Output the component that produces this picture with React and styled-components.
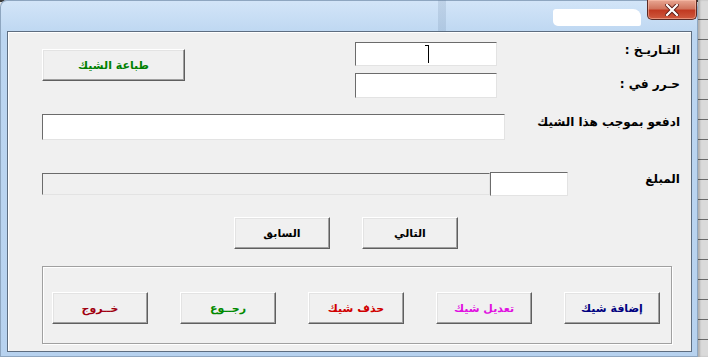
import React from 'react'
import styled, { createGlobalStyle } from 'styled-components'

const Global = createGlobalStyle`
  html, body {
    margin: 0;
    padding: 0;
    background: #dcdcdc;
  }
  #root {
    width: 708px;
    height: 357px;
    overflow: hidden;
  }
`

const FONT = `Tahoma, "DejaVu Sans", sans-serif`

export default function App() {
  return (
    <>
      <Global />
      <Desktop>
        <Window>
          <TitleBar>
            <Redacted />
            <CloseButton>
              <svg width="14" height="12" viewBox="0 0 14 12">
                <path d="M2 1 L12 11 M12 1 L2 11" stroke="#5a1a14" strokeWidth="4" strokeLinecap="square" />
                <path d="M2 1 L12 11 M12 1 L2 11" stroke="#fff" strokeWidth="2.2" strokeLinecap="square" />
              </svg>
            </CloseButton>
          </TitleBar>
          <Client>
            <TopGrid>
              <PrintButton color="#008000">طباعة الشيك</PrintButton>
              <InputCol>
                <TextBox h={24}>
                  <Caret />
                </TextBox>
                <TextBox h={25} />
              </InputCol>
              <LabelCol>
                <Label>التـاريـخ :</Label>
                <Label top={18}>حـرر في :</Label>
              </LabelCol>
            </TopGrid>

            <PayRow>
              <TextBox h={26} />
              <Label>ادفعو بموجب هذا الشيك</Label>
            </PayRow>

            <AmountRow>
              <AmountFields>
                <DisabledBox />
                <TextBox h={24} />
              </AmountFields>
              <Label>المبلغ</Label>
            </AmountRow>

            <NavRow>
              <Button>السابق</Button>
              <Button>التالي</Button>
            </NavRow>

            <Frame>
              <Button color="#a00010">خــروج</Button>
              <Button color="#008a00">رجــوع</Button>
              <Button color="#d00000">حذف شيك</Button>
              <Button color="#e010e0">تعديل شيك</Button>
              <Button color="#000080">إضافة شيك</Button>
            </Frame>
          </Client>
        </Window>
        <ExcelStrip />
      </Desktop>
    </>
  )
}

const Desktop = styled.div`
  display: flex;
  width: 708px;
  height: 357px;
  background: linear-gradient(to bottom, #3a3a3a 0 2px, #e6e6e6 2px);
`

const Window = styled.div`
  width: 698px;
  height: 357px;
  box-sizing: border-box;
  display: flex;
  flex-direction: column;
  padding: 0 6px 5px 7px;
  border-radius: 7px 7px 0 0;
  background: linear-gradient(to bottom, #d3e5f8 0%, #bcd6f1 10%, #b7d2ef 100%);
  box-shadow: inset 0 0 0 1px #8ea6c0, 1px 0 2px rgba(0, 0, 0, 0.35);
`

const TitleBar = styled.div`
  height: 31px;
  display: flex;
  justify-content: flex-end;
  align-items: flex-start;
  margin: 0 -5px 0 -7px;
  border-radius: 7px 7px 0 0;
  background: linear-gradient(
    to right,
    transparent 0 438px,
    rgba(100, 125, 155, 0.18) 438px 446px,
    transparent 446px
  );
`

const Redacted = styled.div`
  width: 88px;
  height: 17px;
  margin-top: 9px;
  margin-right: 6px;
  background: #fff;
  border-radius: 3px 8px 2px 5px;
  filter: blur(0.6px);
`

const CloseButton = styled.div`
  width: 50px;
  height: 20px;
  box-sizing: border-box;
  display: flex;
  align-items: center;
  justify-content: center;
  border: 1px solid #5b2a24;
  border-top: none;
  border-radius: 0 0 5px 5px;
  background: linear-gradient(to bottom, #e8a793 0%, #d1755e 45%, #c13a22 55%, #cf5a3f 100%);
  box-shadow: inset 0 0 0 1px rgba(255, 200, 180, 0.5);
`

const Client = styled.div`
  flex: 1;
  box-sizing: border-box;
  background: #f0f0f0;
  border: 1px solid #5d6d80;
  box-shadow: inset 1px 1px 0 #fff;
  display: flex;
  flex-direction: column;
  font-family: ${FONT};
  direction: ltr;
`

const TopGrid = styled.div`
  display: grid;
  grid-template-columns: 34px 143px 170px 142px 1fr;
  margin-top: 10px;
  padding-right: 11px;
  align-items: start;
`

const Label = styled.div`
  font-family: ${FONT};
  font-weight: bold;
  font-size: 12px;
  line-height: 16px;
  color: #000;
  text-align: right;
  direction: rtl;
  white-space: nowrap;
  margin-top: ${(p) => p.top || 0}px;
`

const LabelCol = styled.div`
  grid-column: 5;
  display: flex;
  flex-direction: column;
`

const InputCol = styled.div`
  grid-column: 4;
  display: flex;
  flex-direction: column;
  gap: 7px;
`

const TextBox = styled.div`
  position: relative;
  height: ${(p) => p.h}px;
  box-sizing: border-box;
  background: #fff;
  border: 1px solid;
  border-color: #6b6b6b #e3e3e3 #e3e3e3 #6b6b6b;
  display: flex;
  align-items: center;
  justify-content: center;
`

const Caret = styled.span`
  width: 1px;
  height: 18px;
  background: #000;
  position: relative;
  left: 2px;

  &::before {
    content: '';
    position: absolute;
    top: 0;
    left: -3px;
    width: 3px;
    height: 1px;
    background: #000;
  }
`

const DisabledBox = styled.div`
  width: 448px;
  height: 22px;
  box-sizing: border-box;
  background: #f0f0f0;
  border: 1px solid;
  border-color: #6b6b6b #e3e3e3 #e3e3e3 #6b6b6b;
`

const Button = styled.div`
  width: 96px;
  height: 32px;
  box-sizing: border-box;
  display: flex;
  align-items: center;
  justify-content: center;
  background: #f0f0f0;
  border: 1px solid;
  border-color: #ffffff #5f5f5f #5f5f5f #ffffff;
  box-shadow: inset -1px -1px 0 #a0a0a0, inset 1px 1px 0 #e3e3e3;
  color: ${(p) => p.color || '#000'};
  font-family: ${FONT};
  font-weight: bold;
  font-size: 11px;
  direction: rtl;
  white-space: nowrap;
`

const PrintButton = styled(Button)`
  grid-column: 2;
  width: 143px;
  height: 32px;
  margin-top: 7px;
`

const PayRow = styled.div`
  display: grid;
  grid-template-columns: 34px 463px 1fr;
  padding-right: 11px;
  margin-top: 16px;
  align-items: start;

  & > ${TextBox} {
    grid-column: 2;
  }
`

const AmountRow = styled.div`
  display: grid;
  grid-template-columns: 34px 526px 1fr;
  padding-right: 11px;
  margin-top: 32px;
  align-items: start;

  & > ${Label} {
    margin-top: -1px;
  }
`

const AmountFields = styled.div`
  grid-column: 2;
  display: flex;
  align-items: flex-start;

  & > ${DisabledBox} {
    margin-top: 1px;
  }

  & > ${TextBox} {
    width: 78px;
  }
`

const NavRow = styled.div`
  display: flex;
  gap: 32px;
  padding-left: 226px;
  margin-top: 21px;
`

const Frame = styled.div`
  width: 630px;
  height: 78px;
  box-sizing: border-box;
  margin-left: 34px;
  margin-top: 17px;
  border: 1px solid #a0a0a0;
  box-shadow: inset 1px 1px 0 #fff, 1px 1px 0 #fff;
  display: flex;
  gap: 32px;
  padding: 25px 0 0 9px;
`

const ExcelStrip = styled.div`
  flex: 1;
  background: repeating-linear-gradient(
    to bottom,
    #dadada 0 19px,
    #6a6a6a 19px 20px
  );
  box-shadow: inset 2px 0 2px rgba(0, 0, 0, 0.2);
`
